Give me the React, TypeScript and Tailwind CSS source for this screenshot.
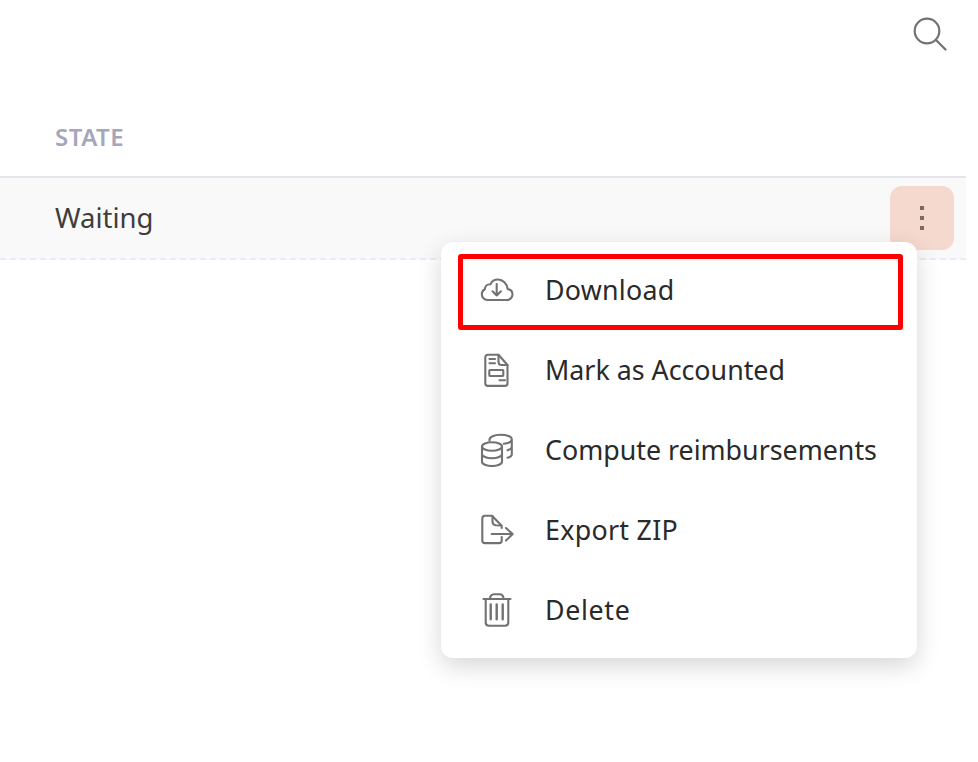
const stroke = "#727272";

function Icon({ children }: { children: React.ReactNode }) {
  return (
    <svg width={34} height={34} viewBox="0 0 34 34" fill="none" stroke={stroke} strokeWidth={2.1} strokeLinecap="round" strokeLinejoin="round">
      {children}
    </svg>
  );
}

const items: { label: string; track: string; icon: React.ReactNode }[] = [
  {
    label: "Download",
    track: "tracking-[0.25px]",
    icon: (
      <Icon>
        <path d="M7.500 27h19c3.300 0 6-2.500 6-5.500 0-2.800-2.100-5-4.800-5.400C27 10.800 23 6.500 18 6.500c-3.300 0-6.200 1.800-7.500 4.800-3.200-.2-5.500 2-5.700 4.900-1.900 1-3 3-3 5.100 0 3.200 2.500 5.700 5.700 5.700Z" />
        <path d="M16.700 11v11.500M12.500 18.300l4.200 4.200 4.200-4.200" />
      </Icon>
    ),
  },
  {
    label: "Mark as Accounted",
    track: "tracking-normal",
    icon: (
      <Icon>
        <path d="M7.800 1.800h10.700l9 10.200v18.200c0 1.700-1 2.700-2.700 2.700H8c-1.700 0-2.700-1-2.700-2.700V4.500C5.300 2.800 6.300 1.800 7.800 1.800Z" />
        <path d="M18.500 1.800v7.200c0 1.800 1.200 3 3 3h6" />
        <path d="M9.500 6h5.500M9.500 10.300h5.500M19.500 27.300h5.500" />
        <rect x="9.300" y="17" width="14" height="6" rx="0.700" />
      </Icon>
    ),
  },
  {
    label: "Compute reimbursements",
    track: "tracking-normal",
    icon: (
      <Icon>
        <ellipse cx="12" cy="13.500" rx="10" ry="4.300" />
        <path d="M2 13.500v15.200c0 2.400 4.500 4.300 10 4.300s10-1.900 10-4.300V13.500M2 21c0 2.400 4.500 4.300 10 4.300S22 23.400 22 21" />
        <path d="M9.500 7.500C9 4 14.500 1.700 20.500 1.700c6.300 0 11.300 2 11.300 4.500s-3.500 4-8 4.500M31.800 6.200v15.300c0 1.400-1.800 2.600-4.300 3.300M31.800 14c0 1.300-1.800 2.500-4.300 3.200" />
      </Icon>
    ),
  },
  {
    label: "Export ZIP",
    track: "tracking-[0.3px]",
    icon: (
      <Icon>
        <path d="M21.700 15V12.700L12 2.700H5c-1.700 0-2.700 1-2.700 2.700v22c0 1.700 1 2.700 2.700 2.700h14c1.700 0 2.700-1 2.700-2.700v-3.400" />
        <path d="M12.500 3v5.500c0 2 1.200 3.500 3.200 3.700l5.500.3" />
        <path d="M11.700 21h21M26 15l6.700 6-6.700 6.400" />
      </Icon>
    ),
  },
  {
    label: "Delete",
    track: "tracking-[0.65px]",
    icon: (
      <Icon>
        <path d="M3.500 6h27" />
        <path d="M10 6c0-3 1.500-4.700 4-4.700h5.500c2.500 0 4 1.700 4 4.700" />
        <path d="M5.700 6v23.500c0 2 1.200 3.200 3.200 3.200h16.200c2 0 3.200-1.200 3.200-3.200V6" />
        <path d="M10.700 11.500v14.800M16.700 11.500v14.800M22.700 11.500v14.800" strokeWidth={2.400} />
      </Icon>
    ),
  },
];

export default function App() {
  return (
    <div className="relative h-[762px] w-[978px] overflow-hidden bg-white font-['Noto_Sans',sans-serif]">
      <div className="w-[966px]">
        <div className="flex h-[100px] justify-end pt-[17px] pr-[19px]">
          <svg width="34" height="34" viewBox="0 0 34 34" fill="none" stroke={stroke} strokeWidth="2.200" strokeLinecap="round">
            <circle cx="14" cy="14" r="12.300" />
            <path d="M23 23l9.500 9.500" />
          </svg>
        </div>
        <div className="flex h-[78px] items-center border-b-2 border-[#e4e4ea] pb-[2px] pl-[55px] text-[24px] font-semibold tracking-[0.5px] text-[#a6a6bb]">STATE</div>
        <div className="flex h-[82px] items-center justify-between border-b-2 border-dashed border-[#eaeafa] bg-[#f9f9f9] pr-3 pl-[55px]">
          <span className="text-[27.500px] text-[#3d3d3d]">Waiting</span>
          <div className="flex h-16 w-16 flex-col items-center justify-center gap-[6px] rounded-xl bg-[#f6d9ce]">
            <span className="h-[4px] w-[4px] bg-[#7a6a66]" />
            <span className="h-[4px] w-[4px] bg-[#7a6a66]" />
            <span className="h-[4px] w-[4px] bg-[#7a6a66]" />
          </div>
        </div>
      </div>
      <div className="absolute top-[242px] left-[441px] flex w-[476px] flex-col rounded-xl bg-white py-2 shadow-[0_8px_24px_rgba(0,0,0,0.16)]">
        {items.map((it) => (
          <div key={it.label} className="flex h-20 items-center gap-[31px] pl-[39px] text-[26.800px] text-[#2a2a2a]">
            <span className="flex w-[34px] justify-center">{it.icon}</span>
            <span className={it.track}>{it.label}</span>
          </div>
        ))}
        <div className="absolute top-3 left-[17px] h-[76px] w-[445px] rounded-[3px] border-[5.500px] border-[#ff0000]" />
      </div>
    </div>
  );
}
